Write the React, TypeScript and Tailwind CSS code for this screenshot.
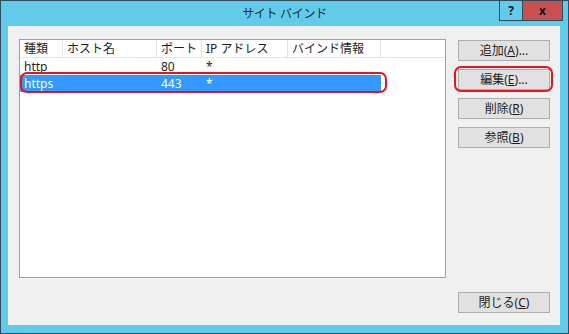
import React from 'react';

const font = { fontFamily: '"Noto Sans", "Noto Sans CJK JP", sans-serif' };

const columns = [
  { label: '種類', w: 'w-[43px]' },
  { label: 'ホスト名', w: 'w-[94px]' },
  { label: 'ポート', w: 'w-[45px]' },
  { label: 'IP アドレス', w: 'w-[86px]' },
  { label: 'バインド情報', w: 'w-[93px]' },
];

const rows = [
  { cells: ['http', '', '80', '*', ''], selected: false },
  { cells: ['https', '', '443', '*', ''], selected: true },
];

function Btn({ label, k, suffix = '' }: { label: string; k: string; suffix?: string }) {
  return (
    <button className="w-[92px] h-[21px] bg-[#e1e1e1] border border-[#adadad] text-[12px] leading-none text-[#1e1e1e] flex items-center justify-center">
      {label}(<span className="underline">{k}</span>){suffix}
    </button>
  );
}

export default function App() {
  return (
    <div
      className="relative w-[569px] h-[334px] bg-[#62cbea] border border-[#34495a] flex flex-col overflow-hidden"
      style={font}
    >
      {/* title bar */}
      <div className="relative h-[25px] flex items-center justify-center shrink-0">
        <span className="text-[12px] text-[#1c2b36] tracking-tight">サイト バインド</span>
        <div className="absolute top-[-1px] right-[5px] flex">
          <div className="w-[24px] h-[21px] border border-[#34495a] bg-[#62cbea] flex items-center justify-center text-[12px] font-bold text-[#111]">
            ?
          </div>
          <div className="w-[40px] h-[21px] border border-l-0 border-[#34495a] bg-[#c75050] flex items-center justify-center text-[12px] font-bold text-[#111]">
            x
          </div>
        </div>
      </div>

      {/* client */}
      <div className="relative ml-[7px] mr-[8px] mb-[8px] flex-1 bg-[#f0f0f0] flex flex-col">
        <div className="flex pl-[11px] pt-[13px]">
          <div className="w-[427px] h-[239px] bg-white border border-[#a0a0a0] text-[12px] text-[#1e1e1e]">
            <div className="flex h-[18px] border-b border-[#e5e5e5]">
              {columns.map((c) => (
                <div key={c.label} className={`${c.w} h-full border-r border-[#e5e5e5] pl-[4px] flex items-center whitespace-nowrap`}>
                  {c.label}
                </div>
              ))}
            </div>
            {rows.map((r, i) => (
              <div
                key={i}
                className={`flex h-[17px] w-[361px] ${r.selected ? 'bg-[#3399ff] text-white' : ''}`}
              >
                {r.cells.map((v, j) => (
                  <div key={j} className={`${columns[j].w} pl-[4px] flex items-center`}>
                    {v}
                  </div>
                ))}
              </div>
            ))}
          </div>

          <div className="ml-[12px] flex flex-col gap-[8px] pt-[1px]">
            <Btn label="追加" k="A" suffix="..." />
            <Btn label="編集" k="E" suffix="..." />
            <Btn label="削除" k="R" />
            <Btn label="参照" k="B" />
          </div>
        </div>

        <div className="pl-[450px] mt-[14px]">
          <Btn label="閉じる" k="C" />
        </div>

        {/* highlight rings */}
        <div className="absolute left-[12px] top-[46px] w-[367px] h-[21px] border-2 border-[#e8141c] rounded-[7px]" />
        <div className="absolute left-[446px] top-[40px] w-[99px] h-[26px] border-2 border-[#e8141c] rounded-[7px]" />
      </div>
    </div>
  );
}
